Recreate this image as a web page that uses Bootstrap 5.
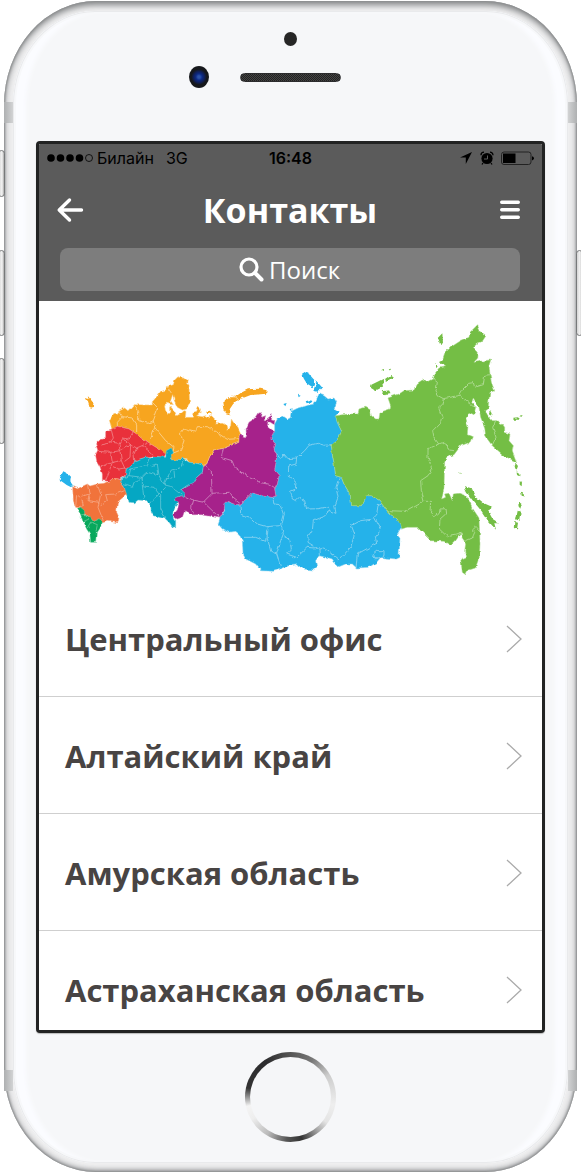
<!DOCTYPE html>
<html lang="ru">
<head>
<meta charset="utf-8">
<meta name="viewport" content="width=device-width, initial-scale=1">
<title>Контакты</title>
<link href="https://cdn.jsdelivr.net/npm/bootstrap@5.3.0/dist/css/bootstrap.min.css" rel="stylesheet">
<style>
body { background: #fff; font-family: "Open Sans", "Noto Sans", sans-serif; }
.stage { padding: 1px 4px 0; overflow: hidden; }
.phone { padding: 0 32px; border-radius: 92px / 104px; background: #f0f0f1;
  box-shadow: inset 0 0 2px 1px #8d8f90, inset 0 6px 6px -2px #8d8f90, inset 0 -3px 4px -1px #a5a6a8, inset 0 0 7px 2px #c4c5c7; }
.face { position: absolute; inset: 10px 9px 9px; border-radius: 82px / 94px; background: #f6f7f9;
  box-shadow: inset 0 0 0 1px #e9eaec, inset 0 0 0 3px #f7f8fa, inset 14px 0 4px -1px #fbfcff, inset -14px 0 4px -1px #fbfcff; }
.side-key { position: absolute; left: -6px; width: 7px; border: 1px solid #77797a; border-radius: 4px; background: linear-gradient(90deg, #d5d5d5, #f4f4f4 60%, #aaa); }
.key-mute { top: 149px; height: 47px; }
.key-up { top: 249px; height: 86px; }
.key-down { top: 357px; height: 86px; }
.key-power { left: auto; right: -6px; top: 249px; height: 86px; }
.band { position: absolute; width: 9px; height: 21px; background: linear-gradient(90deg, #aeb0b1, #d2d3d4); }
.band-end { right: 0; background: linear-gradient(270deg, #aeb0b1, #d2d3d4); }
.band-top { top: 101px; }
.band-bottom { bottom: 81px; }
.forehead { height: 140px; padding-top: 31px; gap: 20px; }
.sensor { width: 13px; height: 14px; background: #262626; }
.camera { width: 20px; height: 22px; background: radial-gradient(circle at 50% 50%, #2c52a8 0 8%, #0c2a86 22%, #10205c 36%, #16181c 52%); }
.ear { gap: 31px; }
.ear-end { width: 20px; }
.speaker { width: 101px; height: 9px; border-radius: 5px; background: repeating-conic-gradient(#222 0 25%, #444 0 50%) 0 0 / 2px 2px; border: 1px solid #2c2c2e; }
.screen { border: 3px solid #222323; border-radius: 4px; background: #fff; overflow: hidden; box-shadow: 0 1px 1px #bbb; }
.app-head { background: #5b5b5b; padding: 0 22px 10px 21px; }
.status { height: 28px; margin: 0 -14px 0 -13px; color: #000; font: 16px/28px Inter, sans-serif; }
.status > div { flex: 1 1 0; }
.status .clock { flex: 0 0 auto; font-weight: 600; }
.bar { height: 76px; }
.bar h1 { font-size: 34px; line-height: 44px; font-weight: 700; }
.bar .btn { line-height: 0; color: #fff; }
.back { margin: 0 -4px; }
.search { height: 43px; border-radius: 8px; background: #7d7d7d; gap: 5px; }
.search input { width: 72px; font-size: 24px; line-height: 32px; color: #fff; background: transparent; outline: 0; }
.search input::placeholder { color: #fff; opacity: 1; }
.offices { font-size: 31px; line-height: 40px; font-weight: 700; }
.offices .list-group-item { padding: 39px 20px 37px 26px; color: #484443; border-color: #cfcfcf; }
.offices .list-group-item:last-child { padding-bottom: 20px; }
.chin { height: 139px; padding-top: 19px; }
.home { width: 91px; height: 90px; border-radius: 50%; padding: 5px;
  background: conic-gradient(#555 0, #777 30deg, #ccc 60deg, #eee 100deg, #e4e4e4 125deg, #aaa 140deg, #333 165deg, #555 185deg, #bbb 212deg, #eee 240deg, #f4f4f4 258deg, #333 282deg, #2c2c2e 325deg, #555 360deg); }
.home span { display: block; height: 100%; border-radius: 50%; background: #f5f6f8; }
</style>
</head>
<body>
<div class="stage">
<div class="phone position-relative">
  <i class="side-key key-mute"></i><i class="side-key key-up"></i><i class="side-key key-down"></i><i class="side-key key-power"></i>
  <div class="face"></div>
  <i class="band band-top start-0"></i><i class="band band-top band-end"></i>
  <i class="band band-bottom start-0"></i><i class="band band-bottom band-end"></i>

  <div class="forehead position-relative d-flex flex-column align-items-center">
    <div class="sensor rounded-circle"></div>
    <div class="ear d-flex align-items-center">
      <div class="camera rounded-circle"></div>
      <div class="speaker"></div>
      <div class="ear-end"></div>
    </div>
  </div>

  <main class="screen position-relative">
    <header class="app-head">
      <div class="status d-flex align-items-center">
        <div class="d-flex align-items-center">
          <svg class="me-1" width="46" height="10" viewBox="0 0 46 10" aria-hidden="true"><g><circle cx="4" cy="5" r="3.800"/><circle cx="13.500" cy="5" r="3.800"/><circle cx="23" cy="5" r="3.800"/><circle cx="32.500" cy="5" r="3.800"/><circle cx="42" cy="5" r="3.500" fill="none" stroke="#000" stroke-width=".8"/></g></svg>
          <span>Билайн</span><span class="ms-2 ps-1">3G</span>
        </div>
        <div class="clock">16:48</div>
        <div class="d-flex align-items-center justify-content-end">
          <svg width="75" height="16" viewBox="0 0 75 16" aria-hidden="true">
            <path d="M13 2 1 7.600h5.800V14z"/>
            <circle cx="28" cy="8.500" r="5.600"/><path d="M22 5.200a3 3 0 0 1 3-3M34 5.200a3 3 0 0 0-3-3M24 13l-1 1.500M32 13l1 1.500" fill="none" stroke="#000" stroke-width="1.300"/><path d="M28.500 5.500v3.500H25" fill="none" stroke="#5b5b5b"/>
            <rect x="42.500" y="2" width="29.500" height="12.500" rx="2.500" fill="none" stroke="#222" stroke-width="1"/><path d="M44 3.500h12.500V13H44z"/><path d="M73 6.200q2 .5 2 2.100t-2 2.100z"/>
          </svg>
        </div>
      </div>
      <div class="bar d-flex align-items-center justify-content-between">
        <button class="btn p-0 border-0 back" type="button" aria-label="Назад">
          <svg width="28" height="26" viewBox="0 0 28 26" fill="none" stroke="currentColor" stroke-width="3.400" stroke-linecap="round" stroke-linejoin="round"><path d="M13.500 3 3.200 13l10.300 10M4 13h21.500"/></svg>
        </button>
        <h1 class="m-0 text-white">Контакты</h1>
        <button class="btn p-0 border-0" type="button" aria-label="Меню">
          <svg width="20" height="20" viewBox="0 0 20 20" fill="none" stroke="currentColor" stroke-width="3.400" stroke-linecap="round"><path d="M1.700 2.300h16.600M1.700 9.800h16.600M1.700 17.300h16.600"/></svg>
        </button>
      </div>
      <label class="search d-flex align-items-center justify-content-center">
        <svg width="25" height="25" viewBox="0 0 25 25" fill="none" stroke="#fff" stroke-linecap="round" aria-hidden="true"><circle cx="10" cy="10" r="8" stroke-width="3.200"/><path d="m16 16 6.500 6.500" stroke-width="4"/></svg>
        <input class="border-0 p-0" type="text" placeholder="Поиск" aria-label="Поиск">
      </label>
    </header>

    <svg class="d-block w-100" viewBox="0 0 1509 837" role="img" aria-label="Карта России">
      <defs>
        <filter id="coast" x="0" y="0" width="1509" height="837" filterUnits="userSpaceOnUse" color-interpolation-filters="sRGB">
          <feTurbulence type="fractalNoise" baseFrequency=".055" numOctaves="3" seed="4"/>
          <feDisplacementMap in="SourceGraphic" scale="11" xChannelSelector="R" yChannelSelector="G"/>
        </filter>
      </defs>
      <g filter="url(#coast)" stroke-width="1.500">
        <!-- Сибирь -->
        <g transform="translate(695 119)">
          <path fill="#25b2ea" stroke="#8fd4ef" d="M12 250 20 235 40 228 50 235 62 228 65 210 82 202 105 195 130 190 138 175 145 160 160 165 172 175 190 172 198 185 190 205 203 215 195 226 200 245 213 272 200 300 182 315 186 345 192 380 195 405 212 410 220 430 235 455 240 495 272 495 288 465 302 465 325 478 345 505 358 520 380 535 392 560 380 580 388 590 385 650 375 655 345 652 330 650 318 665 295 680 258 682 245 670 225 670 205 678 188 665 182 655 165 650 145 645 135 660 138 680 128 688 98 685 80 672 55 675 30 685 8 692-30 690-45 670-75 655-83 640-85 600-95 580-105 572-125 575-145 565-158 550-152 532-138 510-140 490-130 482-105 492-90 490-68 470-55 457-25 465 5 470 15 465 12 445 20 430 25 405 12 390 15 370 18 345 10 325 15 310 0 295 12 270Z"/>
          <path fill="#25b2ea" d="M94 102 112 91 119 108 132 122 126 140 108 128 100 115ZM128 150 138 122 154 140 142 153ZM82 162l8 3-6 5zM38 190l10-3-4 10zM105 182l20-6 3 8-20 4zM60 206l6-3-2 8z"/>
          <path fill="none" stroke="#8fd4ef" stroke-width="2.500" d="M16 336 28 354 40 340 52 354 78 352 102 330 115 314 140 308 162 314 184 312M78 352 76 370 54 376 53 406 76 425 74 445 60 452 65 475 75 480 86 470 102 480 108 505 145 504 172 498 176 510 196 518 192 498 202 470 196 440 205 410M176 508 160 528 128 540 125 570 112 590 112 605 144 625 160 622 205 658 240 620 252 580 242 555 270 540 300 536 318 520 322 495 332 490M310 525 332 565 314 590 318 608 260 640 256 680M4 468 10 490 28 492 38 520 30 550 38 580 30 600 18 640 30 680M44 588 58 600 62 625 48 640 78 650 110 620 135 622M-92 492-90 520-62 530-40 550-12 558 28 555M-80 590-45 590-15 602-12 570M-8 560-10 590 0 632 18 640M145 625 146 645M305 642 320 630 340 630 340 645 315 655Z"/>
        </g>
        <!-- Дальний Восток -->
        <g transform="translate(995 29)">
          <path fill="#74be45" stroke="#a9d98b" d="M-107 316-85 312-60 310-38 310-35 295-15 290 0 298 2 315 15 325 25 325 28 305 58 295 60 285 52 262 85 250 100 240 130 238 140 218 155 208 170 215 188 205 192 190 205 172 225 168 205 155 215 148 222 128 240 110 270 90 295 80 298 65 318 45 325 60 338 70 346 75 335 92 318 97 305 110 320 125 318 145 310 155 340 150 360 148 355 165 358 190 362 215 372 240 358 245 355 265 352 295 345 300 350 312 365 330 378 330 395 340 402 350 402 365 418 370 415 390 428 405 425 420 438 455 400 435 365 405 345 378 342 350 330 320 325 290 308 262 303 275 315 290 310 312 295 305 285 325 292 345 290 372 305 378 298 395 270 405 250 432 228 440 222 455 220 530 213 565 225 560 222 550 235 548 245 570 248 550 265 548 285 555 298 575 305 592 325 622 328 700 325 750 318 770 292 778 285 792 275 785 270 745 285 738 282 720 285 700 275 685 272 665 255 690 240 705 220 692 180 690 160 670 140 650 110 650 92 655 80 625 58 610 45 595 25 568 2 555-12 555-28 585-60 585-65 545-80 520-88 500-105 495-108 470-114 435-118 405-100 390-87 362-100 335Z"/>
          <path fill="#74be45" d="M280 526 302 533 312 555 340 578 367 590 352 600 366 625 386 638 371 638 376 657 353 632 333 602 308 572 288 545ZM201 82 215 68 217 97 209 103ZM2 222 25 211 38 204 42 216 30 232 14 240 1 232ZM42 206 60 193 68 200 50 210ZM33 242 55 239 61 250 42 254ZM33 177l7-2 0 6zM54 176l7-2-1 8zM360 298l6 10-3 10-5-8zM428 321l15-1v7h-14zM446 315l10-2-4 6zM434 456l8 10-5 14-5-12zM438 482l8 5v10l-7-4zM447 512l7 3-1 12-6-5zM453 546l7 2-2 10-6-4zM446 575l7 5-4 14-6-8zM441 600l9 4-5 26-9-4zM434 634l8 2-3 20-7-2zM266 485l4 2-2 4zM196 161l6 4-6 8z"/>
          <path fill="none" stroke="#b4dd9b" stroke-width="2.500" d="M188 205 200 215 196 240 202 255 218 264 264 255 276 236 294 218 308 216 312 230 338 222 342 194 358 192M264 255 282 268 306 286 318 290M218 264 214 282 204 292 214 320 210 335 186 360 190 380 204 400 172 415 172 440 184 475 172 495 150 510 152 540 160 572 108 602 50 600M204 400 218 395 230 402 232 418 250 420M160 572 180 572 178 600 192 618 206 608 208 595 226 594 228 610 208 628 206 655 230 678 262 672 272 665M282 692 305 682 312 665 302 655 312 646 326 662M375 330 366 350 376 380 364 405"/>
        </g>
        <!-- Урал -->
        <g transform="translate(365 179)">
          <path fill="#a6228b" stroke="#c77cb5" d="M240 217 250 235 258 230 256 205 265 185 280 175 290 160 305 155 302 170 315 165 310 180 322 172 335 162 332 178 342 180 340 194 322 182 320 198 338 213 342 212 330 235 345 250 340 265 348 285 345 310 342 330 355 345 350 370 342 385 345 405 335 410 305 405 275 397 262 410 240 430 225 432 200 422 192 430 190 450 178 472 120 462 90 462 72 450 65 470 50 475 35 465 50 448 55 430 42 420 42 410 60 405 72 408 62 388 78 375 100 362 108 350 125 335 128 314 138 310 148 285 160 268 188 263 220 250 234 245 235 225Z"/>
          <path fill="none" stroke="#cf8cc0" stroke-width="2.500" d="M188 264 182 290 214 300 222 320 264 350 300 366 320 370 342 384M132 312 152 330 154 398 128 424 176 470M154 398 205 395 214 410 240 430M72 404 96 418 128 424M96 418 90 440 100 456"/>
        </g>
        <g transform="translate(35 179)">
          <!-- Северо-Запад -->
          <path fill="#f7a51f" stroke="#fbd08a" d="M176 178 190 158 198 160 205 152 222 142 232 150 248 132 305 133 304 124 322 104 330 92 342 88 347 78 368 72 372 58 382 48 398 52 410 60 408 70 415 72 417 130 408 145 395 148 380 140 370 118 366 102 360 120 368 132 348 128 342 132 344 148 352 162 360 155 360 138 372 152 378 165 392 158 400 150 406 152 404 170 425 170 428 155 438 152 442 140 450 145 448 158 438 165 455 168 465 165 472 170 482 165 498 180 496 190 515 188 530 195 532 206 540 195 542 175 548 185 562 200 570 217 565 225 564 245 550 250 518 263 490 268 478 285 468 310 458 314 438 308 415 305 408 295 396 292 390 300 358 298 360 270 345 282 335 272 300 250 270 228 235 205 200 197 184 208Z"/>
          <path fill="#f7a51f" d="M518 125 520 118 535 110 552 110 570 97 592 86 630 84 648 89 646 99 630 101 600 103 575 113 558 119 547 131 537 146 540 164 529 161 521 145ZM101 112 113 115 115 107 129 124 126 139 117 141 112 125ZM467 153l10-3 8 8-16 2z"/>
          <path fill="none" stroke="#fbd597" stroke-width="2.500" d="M205 152 216 168 200 185 200 197M248 132 264 155 264 180 292 188 308 180 322 142 304 124M216 168 245 172 258 190 258 214M308 180 312 200 300 235M312 200 345 240 370 260 366 278 390 268 400 240 386 220 396 205 435 215 440 198 470 198 530 236 564 234M347 78 362 100M545 105 562 114"/>
          <!-- Центр -->
          <path fill="#e9303b" stroke="#f0868b" d="M165 210 182 206 200 197 235 205 270 228 300 250 335 272 345 280 340 290 322 288 305 286 285 290 252 300 248 312 230 325 228 340 205 358 186 356 172 362 155 360 155 340 148 318 138 300 135 285 142 270 135 250 150 236 165 234Z"/>
          <path fill="none" stroke="#f3979b" stroke-width="2" d="M150 250 180 244 205 248 214 232 236 235 248 212M180 244 188 232 182 208M205 248 208 270 180 275 142 272M180 275 185 305 150 318M185 305 212 300 208 270 240 252 214 232M240 252 258 262 290 248M258 262 250 280 252 300M212 300 222 322 230 325M165 360 176 330 185 305M222 322 205 325 190 318M240 252 238 290 222 302M275 256 300 275 305 286"/>
          <!-- Поволжье -->
          <path fill="#05a7c3" stroke="#71cbd9" d="M345 290 347 270 362 262 368 275 358 297 390 300 396 292 415 305 438 308 458 314 455 335 438 350 430 365 408 375 390 388 402 400 400 410 388 405 372 412 372 420 385 425 375 435 368 445 366 465 375 480 375 498 366 500 358 488 345 475 308 465 302 455 300 435 288 420 262 418 252 426 235 425 232 410 222 395 220 378 207 362 228 340 230 325 248 312 252 300 285 290 322 288Z"/>
          <path fill="none" stroke="#78cfdd" stroke-width="2" d="M207 355 235 345 240 325 290 315 300 290M235 345 275 350 290 335 325 345 320 310 300 315M220 372 245 380 250 365 275 350M275 375 310 380 325 400 298 430M275 350 275 375 280 415M325 345 340 370 360 375 392 400M340 370 362 328 395 320 400 298M325 400 345 380M330 400 330 445 345 474M345 355 372 350 370 330"/>
          <!-- Юг -->
          <path fill="#f1733b" stroke="#f7ab88" d="M66 378 80 384 110 370 118 376 140 370 160 368 186 356 205 358 220 378 228 402 215 412 200 425 198 455 205 470 202 486 170 482 155 486 145 475 128 482 115 468 100 458 90 442 75 440 68 420Z"/>
          <path fill="none" stroke="#f8b598" stroke-width="2" d="M110 370 116 400 90 408 78 404 75 435M116 400 112 420 145 425 150 400 140 372M145 425 142 440 158 480M150 432 170 420 165 402 195 400 222 390M92 410 98 435 85 438"/>
          <!-- Северный Кавказ -->
          <path fill="#08a85c" stroke="#6bcb9b" d="M80 444 90 440 102 450 100 460 118 470 128 482 145 474 155 480 153 495 140 515 138 545 120 545 118 520 108 505 96 480 90 462Z"/>
          <path fill="none" stroke="#7fd1a8" stroke-width="2" d="M92 462 104 462M100 482 115 475M110 502 120 484 140 492 136 512"/>
          <!-- Крым -->
          <path fill="#25b2ea" d="M27 352 38 332 52 339 61 348 59 362 69 376 60 379 48 373 40 367 28 359Z"/>
        </g>
      </g>
    </svg>

    <nav class="offices list-group list-group-flush" aria-label="Офисы">
      <a href="#central" class="list-group-item d-flex align-items-center justify-content-between">Центральный офис<svg class="flex-shrink-0" width="16" height="28" viewBox="0 0 16 28" fill="none" stroke="#aaa" stroke-width="1.300"><path d="m1 1 14 13L1 27"/></svg></a>
      <a href="#altai" class="list-group-item d-flex align-items-center justify-content-between">Алтайский край<svg class="flex-shrink-0" width="16" height="28" viewBox="0 0 16 28" fill="none" stroke="#aaa" stroke-width="1.300"><path d="m1 1 14 13L1 27"/></svg></a>
      <a href="#amur" class="list-group-item d-flex align-items-center justify-content-between">Амурская область<svg class="flex-shrink-0" width="16" height="28" viewBox="0 0 16 28" fill="none" stroke="#aaa" stroke-width="1.300"><path d="m1 1 14 13L1 27"/></svg></a>
      <a href="#astrakhan" class="list-group-item d-flex align-items-center justify-content-between">Астраханская область<svg class="flex-shrink-0" width="16" height="28" viewBox="0 0 16 28" fill="none" stroke="#aaa" stroke-width="1.300"><path d="m1 1 14 13L1 27"/></svg></a>
    </nav>
  </main>

  <div class="chin position-relative d-flex justify-content-center">
    <button class="home border-0" type="button" aria-label="Домой"><span></span></button>
  </div>
</div>
</div>
<script src="https://cdn.jsdelivr.net/npm/bootstrap@5.3.0/dist/js/bootstrap.bundle.min.js"></script>
</body>
</html>
